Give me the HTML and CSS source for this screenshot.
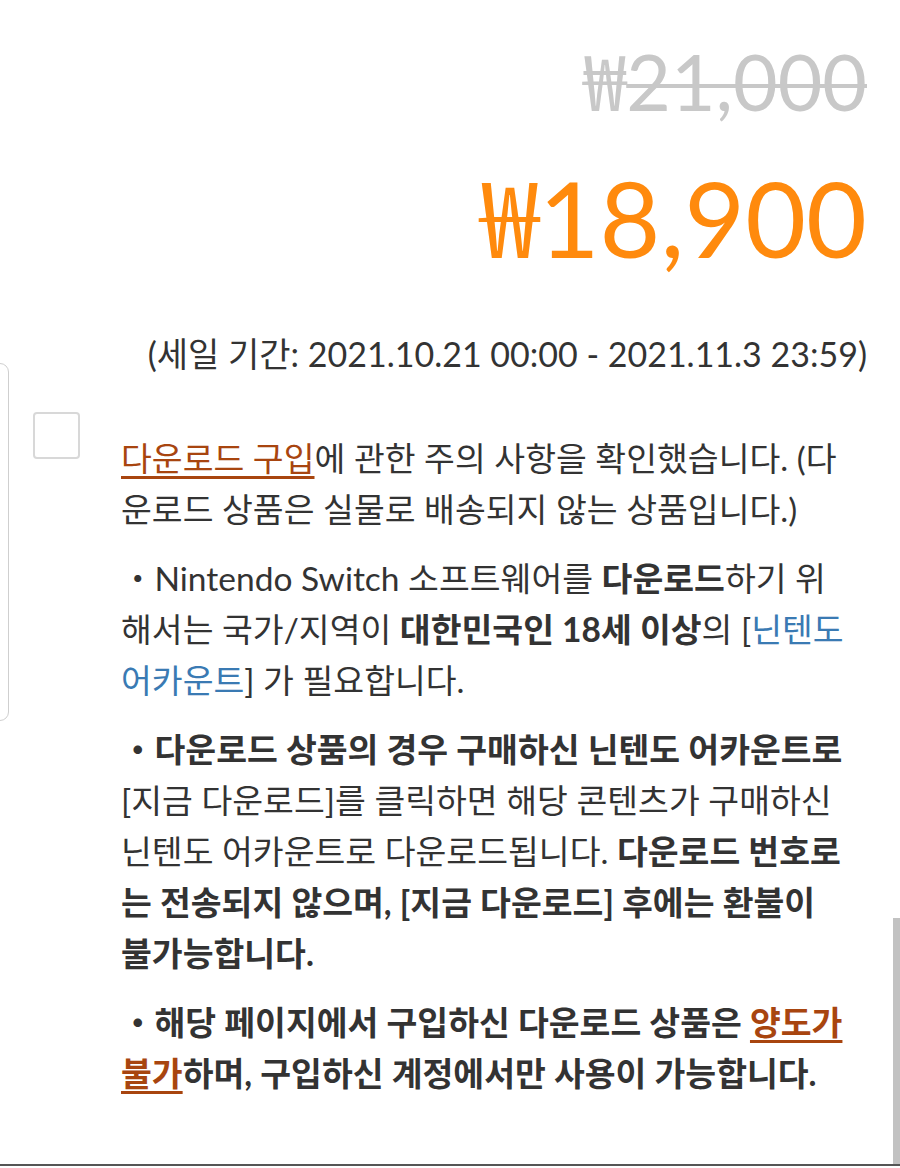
FILE: index.html
```html
<!DOCTYPE html>
<html lang="ko">
<head>
    <meta charset="UTF-8">
    <meta name="viewport" content="width=device-width, initial-scale=1.0">
    <title>다운로드 구입</title>
    <link rel="stylesheet" href="styles.css">
</head>
<body>
    <div class="side-tab"></div>

    <div class="price-box">
        <div class="price-old"><span class="won">₩</span>21,000</div>
        <div class="price-new"><span class="won">₩</span>18,900</div>
        <div class="sale-period">(세일 기간: 2021.10.21 00:00 - 2021.11.3 23:59)</div>
    </div>

    <div class="agree">
        <div class="agree-check"><span class="checkbox"></span></div>
        <div class="agree-text">
            <p><a class="link-brown" href="#">다운로드 구입</a>에 관한 주의 사항을 확인했습니다. (다운로드 상품은 실물로 배송되지 않는 상품입니다.)</p>
            <p>・Nintendo Switch 소프트웨어를 <b>다운로드</b>하기 위해서는 국가/지역이 <b>대한민국인 18세 이상</b>의 [<a class="link-blue" href="#">닌텐도 어카운트</a>] 가 필요합니다.</p>
            <p><b>・다운로드 상품의 경우 구매하신 닌텐도 어카운트로</b> [지금 다운로드]를 클릭하면 해당 콘텐츠가 구매하신 닌텐도 어카운트로 다운로드됩니다. <b>다운로드 번호로는 전송되지 않으며, [지금 다운로드] 후에는 환불이 불가능합니다.</b></p>
            <p><b>・해당 페이지에서 구입하신 다운로드 상품은 <a class="link-brown" href="#">양도가 불가</a>하며, 구입하신 계정에서만 사용이 가능합니다.</b></p>
        </div>
    </div>

    <div class="scroll-thumb"></div>
    <div class="bottom-line"></div>
</body>
</html>
```

FILE: styles.css
```css
body {
    margin: 0;
    width: 900px;
    height: 1168px;
    overflow: hidden;
    background: #fff;
    color: #333;
    font-family: Lato, "Noto Sans CJK KR", sans-serif;
    position: relative;
}

.price-box {
    text-align: right;
    padding: 28px 33px 0 0;
}

.won {
    font-family: "Noto Sans CJK KR", sans-serif;
}

.price-old {
    font-size: 77px;
    line-height: 100px;
    color: #c8c8c8;
    text-decoration: line-through;
    text-decoration-thickness: 4px;
}

.price-new {
    font-size: 105px;
    line-height: 140px;
    color: #ff8a0d;
    margin-top: 11px;
}

.sale-period {
    font-size: 34px;
    line-height: 40px;
    margin-top: 47px;
}

.agree {
    display: flex;
    margin-top: 38px;
}

.agree-check {
    width: 121px;
    flex: none;
}

.checkbox {
    display: block;
    width: 43px;
    height: 43px;
    margin-left: 33px;
    border: 2px solid #d8d8d8;
    border-radius: 4px;
}

.agree-text {
    width: 725px;
    font-size: 33.5px;
    line-height: 51px;
    margin-top: 21px;
}

.agree-text p {
    margin: 0 0 18px;
}

.agree-text b {
    font-weight: 700;
}

.link-brown {
    color: #a8450f;
    text-decoration: underline;
    text-decoration-thickness: 3px;
    text-underline-offset: 5px;
}

.link-blue {
    color: #3a7ab3;
    text-decoration: none;
}

.side-tab {
    position: absolute;
    left: -20px;
    top: 363px;
    width: 27px;
    height: 356px;
    border: 1px solid #cfcfcf;
    border-radius: 9px;
}

.scroll-thumb {
    position: absolute;
    right: 0;
    top: 918px;
    width: 7px;
    height: 247px;
    background: #c2c2c2;
}

.bottom-line {
    position: absolute;
    left: 0;
    bottom: 2px;
    width: 100%;
    height: 2px;
    background: #555;
}
```
